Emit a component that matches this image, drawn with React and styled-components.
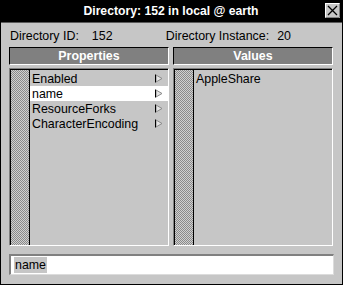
import React from "react";
import styled, { createGlobalStyle } from "styled-components";

const Global = createGlobalStyle`
  body {
    margin: 0;
    background: #c6c6c6;
    font-family: "Liberation Sans", Arial, sans-serif;
  }
`;

const properties = ["Enabled", "name", "ResourceForks", "CharacterEncoding"];
const values = ["AppleShare"];

const Arrow = () => (
  <svg width="8" height="9" viewBox="0 0 8 9">
    <polygon points="1,1 7,4.5 1,8" fill="#e4e4e4" stroke="#8a8a8a" strokeWidth="1" />
    <line x1="0.5" y1="0.5" x2="0.5" y2="8.5" stroke="#000" strokeWidth="1" />
  </svg>
);

const CloseIcon = () => (
  <svg width="15" height="15" viewBox="0 0 15 15">
    <rect x="0.5" y="0.5" width="14" height="14" fill="#c6c6c6" stroke="#fff" />
    <path d="M14.5 0.5 V14.5 H0.5" fill="none" stroke="#808080" />
    <path d="M3 3 L12 12 M12 3 L3 12" stroke="#000" strokeWidth="1.3" />
  </svg>
);

const App = () => {
  return (
    <>
      <Global />
      <Window>
        <TitleBar>
          <Title>Directory: 152 in local @ earth</Title>
          <CloseBox>
            <CloseIcon />
          </CloseBox>
        </TitleBar>
        <Body>
          <InfoRow>
            <Label $gap={13}>Directory ID:</Label>
            <Value $w={74}>152</Value>
            <Label $gap={8}>Directory Instance:</Label>
            <Value>20</Value>
          </InfoRow>
          <Columns>
            <Column>
              <HeaderBar>Properties</HeaderBar>
              <Panel>
                <Stripe />
                <List>
                  {properties.map((p) => (
                    <Row key={p} $selected={p === "name"}>
                      <span>{p}</span>
                      <Arrow />
                    </Row>
                  ))}
                </List>
              </Panel>
            </Column>
            <Column>
              <HeaderBar>Values</HeaderBar>
              <Panel>
                <Stripe />
                <List>
                  {values.map((v) => (
                    <Row key={v}>
                      <span>{v}</span>
                    </Row>
                  ))}
                </List>
              </Panel>
            </Column>
          </Columns>
          <Field>
            <Selected>name</Selected>
          </Field>
        </Body>
      </Window>
    </>
  );
};
export default App;

const Window = styled.div`
  width: 343px;
  height: 285px;
  box-sizing: border-box;
  background: #c6c6c6;
  border: 1px solid #000;
  border-top: none;
  display: flex;
  flex-direction: column;
`;
const TitleBar = styled.div`
  height: 22px;
  background: #000;
  display: flex;
  align-items: center;
  justify-content: center;
  position: relative;
  border-bottom: 1px solid #5a5a5a;
`;
const Title = styled.div`
  color: #fff;
  font-weight: bold;
  font-size: 12.2px;
  margin-left: -1px;
`;
const CloseBox = styled.div`
  position: absolute;
  right: 2px;
  top: 3px;
  display: flex;
`;
const Body = styled.div`
  flex: 1;
  display: flex;
  flex-direction: column;
  padding: 5px 8px 0 8px;
`;
const InfoRow = styled.div`
  display: flex;
  align-items: center;
  height: 15px;
  font-size: 12.4px;
  color: #000;
  padding-left: 1px;
`;
const Label = styled.span`
  margin-right: ${(p) => p.$gap}px;
`;
const Value = styled.span`
  width: ${(p) => (p.$w ? p.$w + "px" : "auto")};
`;
const Columns = styled.div`
  display: grid;
  grid-template-columns: 160px 160px;
  column-gap: 4px;
  margin-top: 4px;
`;
const Column = styled.div`
  display: flex;
  flex-direction: column;
  gap: 3px;
`;
const HeaderBar = styled.div`
  height: 18px;
  box-sizing: border-box;
  background: #808080;
  border: 1px solid;
  border-color: #000 #fff #fff #000;
  color: #fff;
  font-weight: bold;
  font-size: 12.4px;
  display: flex;
  align-items: center;
  justify-content: center;
`;
const Panel = styled.div`
  height: 178px;
  box-sizing: border-box;
  border: 1px solid;
  border-color: #808080 #fff #fff #808080;
  box-shadow: inset 1px 1px 0 #000;
  display: flex;
  padding: 1px 0 0 1px;
`;
const Stripe = styled.div`
  width: 18px;
  background: repeating-conic-gradient(#8a8a8a 0 25%, #d0d0d0 0 50%) 0 0 / 2px 2px;
  border-right: 1px solid #000;
`;
const List = styled.div`
  flex: 1;
  display: flex;
  flex-direction: column;
  padding-top: 1px;
`;
const Row = styled.div`
  height: 15px;
  display: flex;
  align-items: center;
  justify-content: space-between;
  padding: 0 5px 0 2px;
  font-size: 12.4px;
  color: #000;
  background: ${(p) => (p.$selected ? "#fff" : "transparent")};
  svg {
    flex-shrink: 0;
  }
`;
const Field = styled.div`
  margin-top: 8px;
  height: 21px;
  box-sizing: border-box;
  background: #fff;
  border-style: solid;
  border-width: 2px 1px 1px 2px;
  border-color: #808080 #dcdcdc #dcdcdc #808080;
  display: flex;
  align-items: center;
  padding-left: 3px;
  font-size: 12.4px;
`;
const Selected = styled.span`
  background: #c6c6c6;
  color: #000;
  padding: 1px 1px 1px 1px;
  line-height: 14px;
`;
